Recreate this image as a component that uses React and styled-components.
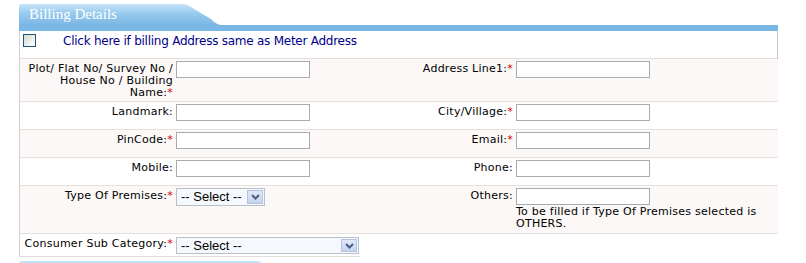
import React from 'react'
import styled, { createGlobalStyle } from 'styled-components'

const GlobalStyle = createGlobalStyle`
  html, body {
    margin: 0;
    background: #fff;
  }
  body {
    font-family: "DejaVu Sans", Verdana, sans-serif;
    font-size: 11px;
    color: #000;
  }
`

const tabPath = (tab) =>
  `path('M0 3 Q0 0 3 0 L${tab} 0 C${tab + 5} 0 ${tab + 8} 2 ${tab + 12} 5 L${tab + 29} 15 C${tab + 33} 19 ${tab + 36} 21 ${tab + 41} 21 L759 21 L759 27 L0 27 Z')`

const Page = styled.div`
  width: 759px;
  padding: 4px 0 0 19px;
`

const Header = styled.div`
  height: 27px;
  width: 759px;
  background: linear-gradient(180deg, #c6e4f8 0px, #98cbee 9px, #7ab7e5 21px, #7ab7e5 27px);
  clip-path: ${(p) => tabPath(p.$tab)};
`

const HeaderTitle = styled.h2`
  margin: 0;
  padding: 2px 0 0 10px;
  font: normal 15px/17px "Liberation Serif", "Times New Roman", serif;
  color: #fff;
`

const Panel = styled.div`
  border-left: 1px solid #d2d2d2;
`

const SameRow = styled.label`
  display: flex;
  align-items: flex-start;
  height: 28px;
  box-sizing: border-box;
  padding: 3px 0 0 3px;
  border-right: 1px solid #c8c8c8;
  border-bottom: 1px solid #e4ddd8;
  background: #fff;
  cursor: pointer;
`

const Check = styled.input`
  appearance: none;
  width: 13px;
  height: 13px;
  margin: 0;
  box-sizing: border-box;
  border: 1px solid #1c5180;
  background: linear-gradient(135deg, #d8d8d1 0%, #f0f0ec 60%, #fff 100%);
`

const SameText = styled.span`
  margin-left: 27px;
  font-size: 12px;
  line-height: 14px;
  letter-spacing: -0.25px;
  color: #00008b;
`

const FormRow = styled.div`
  display: grid;
  grid-template-columns: 156px 200px 140px 1fr;
  min-height: 27px;
  border-bottom: 1px solid #e6e0db;
  background: ${(p) => (p.$shade ? '#fcf8f7' : '#fff')};
`

const Label = styled.div`
  padding: 4px 3px 2px ${(p) => p.$indent || 0}px;
  text-align: right;
  line-height: 12px;
  letter-spacing: 0.25px;
  white-space: ${(p) => (p.$wrap ? 'normal' : 'nowrap')};
`

const LastWord = styled.span`
  display: inline-block;
  white-space: nowrap;
`

const Req = styled.span`
  color: #d40000;
`

const Field = styled.div`
  padding: 2px 0 3px;
`

const TextBox = styled.input`
  display: block;
  width: 134px;
  height: 17px;
  margin: 0;
  padding: 0 2px;
  box-sizing: border-box;
  border: 1px solid #a5acb2;
  background: #fff;
  font: 11px "DejaVu Sans", sans-serif;
`

const Note = styled.div`
  margin-top: 1px;
  line-height: 12px;
  letter-spacing: 0.25px;
  padding-right: 6px;
`

const SelectBox = styled.div`
  display: flex;
  align-items: center;
  width: ${(p) => p.$w}px;
  height: ${(p) => p.$h}px;
  box-sizing: border-box;
  border: 1px solid #b9c0ca;
  background: #f5f9fe;
  font: 13px/16px "Liberation Sans", Arial, sans-serif;
  color: #000;
`

const SelectText = styled.span`
  flex: 1;
  padding-left: 4px;
  white-space: nowrap;
`

const Arrow = styled.span`
  display: flex;
  align-items: center;
  justify-content: center;
  width: 16px;
  height: calc(100% - 2px);
  margin-right: 1px;
  box-sizing: border-box;
  border: 1px solid #b4c3df;
  background: linear-gradient(180deg, #dfe8f8 0%, #c6d4ef 100%);
`

const ConsumerRow = styled.div`
  display: grid;
  grid-template-columns: 156px 184px;
  width: 340px;
  border-left: 1px solid #d2d2d2;
  border-bottom: 1px solid #e6e0db;
  background: #fff;
`

const ConsumerField = styled.div`
  padding: 3px 0 2px;
`

const NextHeader = styled(Header)`
  margin-top: 4px;
`

const Select = ({ w, h, value }) => (
  <SelectBox $w={w} $h={h}>
    <SelectText>{value}</SelectText>
    <Arrow>
      <svg width="9" height="6" viewBox="0 0 9 6">
        <path d="M1 1 L4.5 4.5 L8 1" fill="none" stroke="#4a5d82" strokeWidth="2" />
      </svg>
    </Arrow>
  </SelectBox>
)

const rows = [
  {
    left: 'Plot/ Flat No/ Survey No / House No / Building ',
    leftLast: 'Name:',
    leftReq: true,
    right: 'Address Line1:',
    rightReq: true,
    wrap: true,
  },
  { left: 'Landmark:', right: 'City/Village:', rightReq: true },
  { left: 'PinCode:', leftReq: true, right: 'Email:', rightReq: true },
  { left: 'Mobile:', right: 'Phone:' },
]

export default function App() {
  return (
    <Page>
      <GlobalStyle />
      <Header $tab={163}>
        <HeaderTitle>Billing Details</HeaderTitle>
      </Header>
      <Panel>
        <SameRow>
          <Check type="checkbox" />
          <SameText>Click here if billing Address same as Meter Address</SameText>
        </SameRow>
        {rows.map((r, i) => (
          <FormRow key={r.left} $shade={i % 2 === 0}>
            <Label $indent={6} $wrap={r.wrap}>
              {r.left}
              {r.leftLast ? (
                <LastWord>
                  {r.leftLast}
                  <Req>*</Req>
                </LastWord>
              ) : (
                r.leftReq && <Req>*</Req>
              )}
            </Label>
            <Field>
              <TextBox />
            </Field>
            <Label>
              {r.right}
              {r.rightReq && <Req>*</Req>}
            </Label>
            <Field>
              <TextBox />
            </Field>
          </FormRow>
        ))}
        <FormRow $shade>
          <Label>
            Type Of Premises:<Req>*</Req>
          </Label>
          <Field>
            <Select w={89} h={18} value="-- Select --" />
          </Field>
          <Label>Others:</Label>
          <Field>
            <TextBox />
            <Note>To be filled if Type Of Premises selected is OTHERS.</Note>
          </Field>
        </FormRow>
      </Panel>
      <ConsumerRow>
        <Label>
          Consumer Sub Category:<Req>*</Req>
        </Label>
        <ConsumerField>
          <Select w={183} h={17} value="-- Select --" />
        </ConsumerField>
      </ConsumerRow>
      <NextHeader $tab={236} />
    </Page>
  )
}
